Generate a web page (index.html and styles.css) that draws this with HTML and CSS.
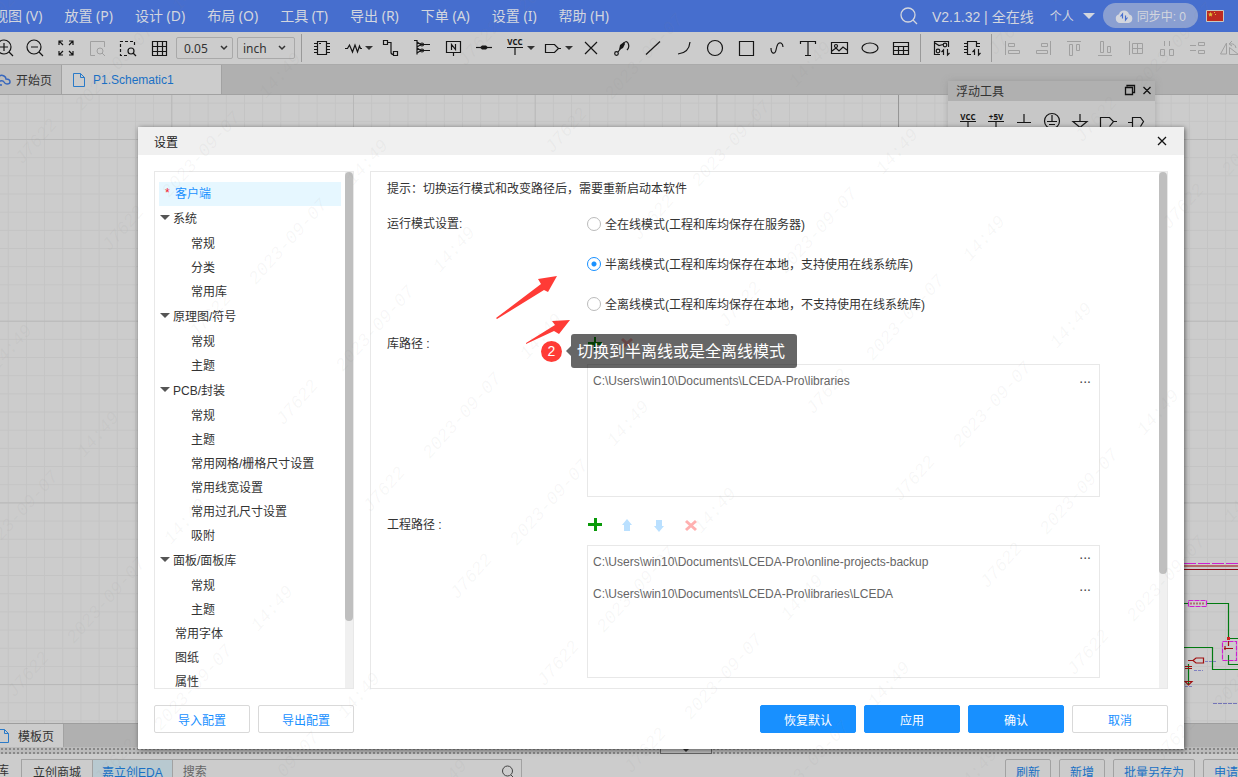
FILE: index.html
```html
<!DOCTYPE html>
<html lang="zh-CN">
<head>
<meta charset="utf-8">
<title>设置</title>
<link rel="stylesheet" href="styles.css">
</head>
<body>
<div class="app">
  <header class="menubar">
    <nav class="menus">
      <a href="#">视图 (V)</a><a href="#">放置 (P)</a><a href="#">设计 (D)</a><a href="#">布局 (O)</a><a href="#">工具 (T)</a><a href="#">导出 (R)</a><a href="#">下单 (A)</a><a href="#">设置 (I)</a><a href="#">帮助 (H)</a>
    </nav>
    <div class="account">
      <svg class="search" width="18" height="18" viewBox="0 0 18 18"><circle cx="8" cy="8" r="7"/><path d="M13 13l4 4"/></svg>
      <span class="version">V2.1.32 | 全在线</span>
      <button class="user" type="button">个人<i class="caret wide"></i></button>
      <button class="sync" type="button"><svg width="18" height="14" viewBox="0 0 18 14"><path fill="#d3d6de" d="M5 14a4.500 4.500 0 0 1-1-8.800A5.200 5.200 0 0 1 14 5.200 4.500 4.500 0 0 1 13.500 14z"/><path fill="none" stroke="#466ece" stroke-width="1.200" d="M5.500 7.500L7.500 5v4.500M12.500 8.500L10.500 11V6.500"/></svg>同步中: 0</button>
      <svg width="18" height="12" viewBox="0 0 18 12"><path fill="#bd2a20" stroke="#c9c9c0" d="M.5.5h17v11H.5z"/><path fill="#e0be38" d="M4.500 2l.8 1.500 1.700.2-1.300 1.100.3 1.700-1.500-.8L3 6.500l.3-1.700L2 3.700l1.700-.2zM8 2h1v1H8zM9 4h1v1H9z"/></svg>
    </div>
  </header>

  <div class="toolbar">
    <div class="tools first">
      <button type="button" aria-label="放大"><svg viewBox="0 0 24 24"><circle cx="12" cy="11" r="7"/><path d="M17 16l4 4M8 11h8M12 7v8"/></svg></button>
      <button type="button" aria-label="缩小"><svg viewBox="0 0 24 24"><circle cx="11" cy="11" r="7"/><path d="M16 16l4 4M8 11h7"/></svg></button>
      <button type="button" aria-label="适应窗口"><svg viewBox="0 0 24 24"><path d="M9 9L5 5M5 9V5h4M15 9l4-4M15 5h4v4M9 15l-4 4M5 15v4h4M15 15l4 4M19 15v4h-4"/></svg></button>
      <button type="button" aria-label="缩放选中" disabled><svg viewBox="0 0 24 24"><path d="M10 19.500H5.500v-14h14V11"/><circle cx="15" cy="15" r="3"/><path d="M17 17l3 3"/></svg></button>
      <button type="button" aria-label="框选缩放"><svg viewBox="0 0 24 24"><path stroke-dasharray="3 2" d="M11 19.500H4.500v-14h14V11"/><circle cx="15" cy="15" r="3"/><path d="M17 17l3 3"/></svg></button>
      <button type="button" aria-label="网格"><svg viewBox="0 0 24 24"><path d="M5.500 5.500h14v14h-14zM10.500 5v15M15.500 5v15M5 10.500h15M5 15.500h15"/></svg></button>
    </div>
    <select class="grid-size" aria-label="网格尺寸"><option>0.05</option></select>
    <select class="unit" aria-label="单位"><option>inch</option></select>
    <i class="sep"></i>
    <div class="tools">
      <button type="button" aria-label="器件"><svg viewBox="0 0 24 24"><path d="M7.500 5.500h9v13h-9zM4 7.500h3M4 10.500h3M4 13.500h3M4 16.500h3M17 7.500h3M17 10.500h3M17 13.500h3M17 16.500h3M9 7.500h2"/></svg></button>
      <button type="button" aria-label="常用器件" class="drop"><svg viewBox="0 0 24 24"><path d="M4 12.500h2.500l2-3.500 3 7 2.500-7 2.500 7 2-6 1 2.500H21"/></svg><i class="caret"></i></button>
      <button type="button" aria-label="导线"><svg viewBox="0 0 24 24"><path d="M4.500 4.500h4v4h-4zM9 6.500h3v10q0 2 3 2M14.500 15.500h4v4h-4z"/></svg></button>
      <button type="button" aria-label="总线"><svg viewBox="0 0 24 24"><path d="M4 4.500h3v14M7 6l4 2.500h9M7 12l4 2.500h9M7 11l4-2.500M7 17l4-2.500"/><circle cx="12" cy="8.500" r="1.500"/><circle cx="12" cy="14.500" r="1.500"/></svg></button>
      <button type="button" aria-label="网络标签"><svg viewBox="0 0 24 24"><path d="M5.500 5.500h14v11h-14zM12.500 17v3M10.500 14V8.500l4 5V8"/></svg></button>
      <button type="button" aria-label="节点"><svg viewBox="0 0 24 24"><path d="M4 11.500h16"/><path class="solid" stroke="none" d="M8 11.500l2-2h4l2 2-2 2h-4z"/></svg></button>
      <button type="button" aria-label="电源" class="drop"><svg viewBox="0 0 24 24"><text x="12" y="9">VCC</text><path d="M4 11.500h16M12 12v7"/></svg><i class="caret"></i></button>
      <button type="button" aria-label="端口" class="drop"><svg viewBox="0 0 24 24"><path d="M4.500 8.500h9l4 4-4 4h-9zM17 12.500h3"/></svg><i class="caret"></i></button>
      <button type="button" aria-label="非连接标识"><svg viewBox="0 0 24 24"><path d="M6 6l12 12M18 6L6 18"/></svg></button>
      <button type="button" aria-label="探针"><svg viewBox="0 0 24 24"><circle cx="6.500" cy="17.500" r="1.800"/><path d="M8 16l3-4M17 14q3-3 1-7-2-3-5 1"/><path class="solid" stroke="none" d="M9 14l1-5 4-3 1 2-2 4z"/></svg></button>
      <button type="button" aria-label="直线"><svg viewBox="0 0 24 24"><path d="M5 18.500L19 5.500"/></svg></button>
      <button type="button" aria-label="圆弧"><svg viewBox="0 0 24 24"><path d="M6 18q11-1 12-12"/></svg></button>
      <button type="button" aria-label="圆"><svg viewBox="0 0 24 24"><circle cx="12" cy="12" r="7.500"/></svg></button>
      <button type="button" aria-label="矩形"><svg viewBox="0 0 24 24"><path d="M5.500 5.500h14v14h-14z"/></svg></button>
      <button type="button" aria-label="曲线"><svg viewBox="0 0 24 24"><path d="M6 12c0 6 4 7 5 2s2-8 5-7q2 1 2 4"/></svg></button>
      <button type="button" aria-label="文本"><svg viewBox="0 0 24 24"><path d="M4.500 8V5.500h15V8M12 5v14M9 19.500h6"/></svg></button>
      <button type="button" aria-label="图片"><svg viewBox="0 0 24 24"><path d="M4.500 6.500h16v11h-16zM5 15l4-3 3 3 4-4 4 3"/><circle cx="9" cy="10" r="1.500"/></svg></button>
      <button type="button" aria-label="椭圆"><svg viewBox="0 0 24 24"><ellipse cx="12" cy="12" rx="8" ry="5"/></svg></button>
      <button type="button" aria-label="表格"><svg viewBox="0 0 24 24"><path d="M4.500 6.500h15v12h-15zM4 10.500h16M4 14.500h16M9.500 11v8M14.500 11v8"/></svg></button>
    </div>
    <i class="sep"></i>
    <div class="tools">
      <button type="button" aria-label="标注"><svg viewBox="0 0 24 24"><path d="M11 18.500H5.500v-13h14V11M6 7l4 2.500 4-1M14.500 19v-5l-2 2M18.500 13v6l2-2"/><circle cx="16" cy="9" r="1.800"/><circle cx="9" cy="15" r="1.800"/></svg></button>
      <button type="button" aria-label="更新器件"><svg viewBox="0 0 24 24"><path d="M11 18.500H7.500v-13h9V11M4 7.500h3M4 10.500h3M4 13.500h3M4 16.500h3M17 7.500h3M17 10.500h3M14.500 19v-5l-2 2M18.500 13v6l2-2"/></svg></button>
    </div>
    <i class="sep"></i>
    <div class="tools">
      <button type="button" aria-label="左对齐" disabled><svg viewBox="0 0 24 24"><path d="M5.500 5v14M8.500 7.500h6v3h-6zM8.500 14.500h11v3h-11z"/></svg></button>
      <button type="button" aria-label="右对齐" disabled><svg viewBox="0 0 24 24"><path d="M19.500 5v14M10.500 7.500h6v3h-6zM5.500 14.500h11v3h-11z"/></svg></button>
      <button type="button" aria-label="顶对齐" disabled><svg viewBox="0 0 24 24"><path d="M5 5.500h14M7.500 8.500h3v11h-3zM14.500 8.500h3v6h-3z"/></svg></button>
      <button type="button" aria-label="底对齐" disabled><svg viewBox="0 0 24 24"><path d="M5 19.500h14M7.500 5.500h3v11h-3zM14.500 10.500h3v6h-3z"/></svg></button>
      <button type="button" aria-label="对齐网格" disabled><svg viewBox="0 0 24 24"><path d="M5.500 5v14M8.500 7.500h10v10h-10zM13.500 7v11M8 12.500h11"/></svg></button>
      <button type="button" aria-label="水平等距" disabled><svg viewBox="0 0 24 24"><path d="M9.500 5v5M14.500 5v5M5.500 13.500h4v6h-4zM14.500 13.500h4v6h-4z"/></svg></button>
      <button type="button" aria-label="垂直等距" disabled><svg viewBox="0 0 24 24"><path d="M4 9.500h6M4 14.500h6M12.500 6.500h6v3h-6zM12.500 14.500h6v3h-6z"/></svg></button>
      <button type="button" aria-label="旋转" disabled><svg viewBox="0 0 24 24"><path d="M9.500 7v11h-6zM12.500 18.500h9l-9-7zM13 8q5-1 6 4M15 5l-3 3 3 2"/></svg></button>
    </div>
  </div>

  <div class="tabs">
    <a href="#" class="tab home"><svg width="14" height="14" viewBox="0 0 14 14"><path fill="none" stroke="#3666bd" stroke-width="1.500" d="M0 8Q0 6 1 5q2-4 6-2 2 1 2 3 4 0 4 3 0 2-3 2-2 0-3-2T3 8q-2 2 0 4h2"/></svg>开始页</a>
    <a href="#" class="tab active"><svg width="14" height="16" viewBox="0 0 14 16"><path fill="none" stroke="#2a7ac8" d="M1.500 1.500h7l4 4v9h-11zM8.500 1.500v4h4"/></svg>P1.Schematic1</a>
  </div>

  <main class="canvas">
    <svg class="grid" width="100%" height="100%">
      <defs>
        <pattern id="minor" width="18.170" height="18.170" patternUnits="userSpaceOnUse" x="-10.400" y="44"><path d="M0 .5H18.200M.5 0V18.200" stroke="#c4c4c4" fill="none"/></pattern>
        <pattern id="major" width="181.700" height="181.700" patternUnits="userSpaceOnUse" x="-10.400" y="44"><path d="M0 .5H182M.5 0V182" stroke="#b8b8b8" fill="none"/></pattern>
      </defs>
      <rect width="100%" height="100%" fill="url(#minor)"/><rect width="100%" height="100%" fill="url(#major)"/>
      <path d="M898.500 0v40" stroke="#969696"/>
    </svg>
    <svg class="schematic" width="54" height="150" viewBox="1184 555 54 150">
      <g fill="none"><path stroke="#cf1fcf" stroke-dasharray="12 2" d="M1184 563.500h54"/><path stroke="#b56a6a" stroke-width="2" d="M1184 566h54"/><path stroke="#8c0a18" d="M1184 569.500h54"/>
      <path stroke="#007a10" stroke-width="1.200" d="M1184 603.500h4M1206 603.500h22.500v35M1228.500 638.500h10M1184 647.500h28.500v22H1238M1228.500 655v9.500h10M1188.500 664v20"/>
      <path stroke="#cf1fcf" stroke-width="1.200" stroke-dasharray="5 1" d="M1188.500 600.500h18v6h-18zM1222.500 641.500h14v19h-14z"/><path stroke="#b07070" stroke-width="2" stroke-dasharray="2 1" d="M1190 603.500h14"/>
      <path stroke="#a01010" stroke-width="1.200" d="M1224 648.500h9M1225 646v4M1228.500 641v5M1193 660.500l3-2.500h7.500v5h-7.500zM1188 660.500h5M1185 666.500h7M1185 668.500h7M1185 681.500h7l-3.500 3.500z"/></g>
      <path fill="#d02020" d="M1227 637h3v3h-3z"/><path stroke="#8080c0" stroke-dasharray="3 1" d="M1205 661.500h11M1194 670.500h9M1185 686.500h8"/><path stroke="#7474b8" stroke-dasharray="4 1" d="M1213 703.500h25"/>
    </svg>
  </main>

  <div class="page-tabs"><a href="#" class="page-tab"><svg width="14" height="16" viewBox="0 0 14 16"><path fill="none" stroke="#2a7ac8" d="M1.500 1.500h7l4 4v9h-11zM8.500 1.500v4h4"/></svg>模板页</a></div>
  <div class="splitter"><i class="handle"><i class="caret"></i></i></div>
  <footer class="library">
    <span class="lib-label">库</span>
    <div class="lib-search"><button type="button">立创商城</button><button type="button" class="on">嘉立创EDA</button><input type="text" placeholder="搜索" aria-label="搜索"><svg width="14" height="14" viewBox="0 0 14 14"><circle cx="6.500" cy="6" r="5"/><path d="M10 10l3 3"/></svg></div>
    <div class="lib-actions"><button type="button">刷新</button><button type="button">新增</button><button type="button">批量另存为</button><button type="button">申请</button></div>
  </footer>
</div>

<section class="floating">
  <div class="floating-title"><span>浮动工具</span><svg width="32" height="12" viewBox="0 0 32 12"><path d="M4 2.500V1.500h7.500v7H10M2.500 3.500h7v7h-7zM20.500 3l7 7M27.500 3l-7 7"/></svg></div>
  <div class="floating-icons">
    <svg viewBox="0 0 24 24"><text x="12" y="10">VCC</text><path d="M4 11.500h16M12 12v7"/></svg>
    <svg viewBox="0 0 24 24"><text x="12" y="10">+5V</text><path d="M4 11.500h16M12 12v7"/></svg>
    <svg viewBox="0 0 24 24"><path d="M12 4v8M5 12.500h14"/></svg>
    <svg viewBox="0 0 24 24"><circle cx="12" cy="11" r="7.500"/><path d="M12 5v6M7 11.500h10M9 14.500h6"/></svg>
    <svg viewBox="0 0 24 24"><path d="M12 4v7M5 11.500h14l-7 6z"/></svg>
    <svg viewBox="0 0 24 24"><path d="M4.500 17V7.500h9l4 4-4 5M17 11.500h4"/></svg>
    <svg viewBox="0 0 24 24"><path d="M4 12.500h4M8.500 17V7.500h8l3 4-3 5"/></svg>
  </div>
</section>

<section class="dialog" role="dialog" aria-labelledby="dialog-title">
  <div class="dialog-title"><span id="dialog-title">设置</span><button type="button" aria-label="关闭"><svg width="12" height="12" viewBox="0 0 12 12"><path d="M2 2l8 8M10 2l-8 8"/></svg></button></div>
  <div class="dialog-body">
    <nav class="tree">
      <ul>
        <li class="leaf top selected"><a href="#"><b>*</b>客户端</a></li>
        <li class="group"><a href="#">系统</a></li>
        <li class="leaf"><a href="#">常规</a></li><li class="leaf"><a href="#">分类</a></li><li class="leaf"><a href="#">常用库</a></li>
        <li class="group"><a href="#">原理图/符号</a></li>
        <li class="leaf"><a href="#">常规</a></li><li class="leaf"><a href="#">主题</a></li>
        <li class="group"><a href="#">PCB/封装</a></li>
        <li class="leaf"><a href="#">常规</a></li><li class="leaf"><a href="#">主题</a></li><li class="leaf"><a href="#">常用网格/栅格尺寸设置</a></li><li class="leaf"><a href="#">常用线宽设置</a></li><li class="leaf"><a href="#">常用过孔尺寸设置</a></li><li class="leaf"><a href="#">吸附</a></li>
        <li class="group"><a href="#">面板/面板库</a></li>
        <li class="leaf"><a href="#">常规</a></li><li class="leaf"><a href="#">主题</a></li>
        <li class="leaf top"><a href="#">常用字体</a></li><li class="leaf top"><a href="#">图纸</a></li><li class="leaf top"><a href="#">属性</a></li>
      </ul>
      <div class="scroll"><i class="thumb tree-thumb"></i></div>
    </nav>
    <div class="panel">
      <form class="settings">
        <p class="tip">提示：切换运行模式和改变路径后，需要重新启动本软件</p>
        <div class="field">
          <span class="label">运行模式设置:</span>
          <div class="control">
            <label><input type="radio" name="mode"><span>全在线模式(工程和库均保存在服务器)</span></label>
            <label><input type="radio" name="mode" checked><span>半离线模式(工程和库均保存在本地，支持使用在线系统库)</span></label>
            <label><input type="radio" name="mode"><span>全离线模式(工程和库均保存在本地，不支持使用在线系统库)</span></label>
          </div>
        </div>
        <div class="field">
          <span class="label">库路径 :</span>
          <div class="control">
            <div class="path-tools">
              <button type="button" aria-label="添加库路径"><svg viewBox="0 0 16 16"><path fill="#0a9a0a" d="M7 1h2v5h6v3H9v5H7V9H1V6h6z"/></svg></button>
              <button type="button" aria-label="删除库路径"><svg viewBox="0 0 16 16"><path stroke="#ffb0b0" stroke-width="3" d="M3 3l10 9M13 3L3 12"/></svg></button>
            </div>
            <ul class="paths"><li>C:\Users\win10\Documents\LCEDA-Pro\libraries<button type="button" aria-label="浏览">...</button></li></ul>
          </div>
        </div>
        <div class="field spaced">
          <span class="label">工程路径 :</span>
          <div class="control">
            <div class="path-tools">
              <button type="button" aria-label="添加工程路径"><svg viewBox="0 0 16 16"><path fill="#0a9a0a" d="M7 1h3v5h5v3h-5v5H7V9H1V6h6z"/></svg></button>
              <button type="button" aria-label="上移"><svg viewBox="0 0 16 16"><path fill="#bae0ff" d="M8 2l5 6h-2v6H5V8H3z"/></svg></button>
              <button type="button" aria-label="下移"><svg viewBox="0 0 16 16"><path fill="#bae0ff" d="M8 15l5-6h-2V3H5v6H3z"/></svg></button>
              <button type="button" aria-label="删除工程路径"><svg viewBox="0 0 16 16"><path stroke="#ffb0b0" stroke-width="3" d="M3 4l10 9M13 4L3 13"/></svg></button>
            </div>
            <ul class="paths compact"><li>C:\Users\win10\Documents\LCEDA-Pro\online-projects-backup<button type="button" aria-label="浏览">...</button></li><li>C:\Users\win10\Documents\LCEDA-Pro\libraries\LCEDA<button type="button" aria-label="浏览">...</button></li></ul>
          </div>
        </div>
      </form>
      <div class="scroll"><i class="thumb panel-thumb"></i></div>
    </div>
  </div>
  <div class="dialog-footer">
    <button type="button" class="btn">导入配置</button><button type="button" class="btn">导出配置</button>
    <button type="button" class="btn primary push">恢复默认</button><button type="button" class="btn primary">应用</button><button type="button" class="btn primary">确认</button><button type="button" class="btn">取消</button>
  </div>
</section>

<svg class="arrows" width="90" height="80" viewBox="490 270 90 80"><path fill="#ff3b36" d="M496 318L541 284l-3-5 19-3-9 16-4-2-47 29zM526 343l29-18-3-4 18-1-11 14-5-3-28 13z"/></svg>
<div class="callout"><span class="badge">2</span><span class="bubble">切换到半离线或是全离线模式</span></div>
<svg class="watermark" id="watermark" aria-hidden="true"></svg>
<script src="script.js"></script>
</body>
</html>
```
FILE: script.js
```js
// Tile the date, time and user number diagonally over the window.
const layer = document.getElementById('watermark');
const STEP = 87;
const lines = [
  { text: 'J7622', diagonal: -105, phase: 40 },
  { text: '2023-09-07', diagonal: 47, phase: 31 },
  { text: '14:49', diagonal: 205, phase: 23 }
];
for (const line of lines) {
  for (let n = -3; n <= 3; n++) {
    const diff = line.diagonal + n * 541;
    for (let x = line.phase + n * 8 - 5 * STEP; x < innerWidth + STEP; x += STEP) {
      const y = x - diff;
      if (y < -40 || y > innerHeight + 40 || x < -40) continue;
      const t = document.createElementNS('http://www.w3.org/2000/svg', 'text');
      t.setAttribute('transform', `translate(${x} ${y}) rotate(-48)`);
      t.textContent = line.text;
      layer.appendChild(t);
    }
  }
}
```
FILE: styles.css
```css
* { box-sizing: border-box; }
body, ul, p { margin: 0; padding: 0; }
ul { list-style: none; }
body, button, input, select { font-family: "Liberation Sans", "Noto Sans CJK SC", sans-serif; font-size: 12px; }
body { color: #333; overflow: hidden; }
button { margin: 0; padding: 0; border: 0; background: none; color: inherit; }
a { color: inherit; text-decoration: none; }
svg { flex: none; display: block; }

.app { display: flex; flex-direction: column; height: 100vh; background: #ccc; overflow: hidden; }
.caret { border: 4px solid transparent; border-top-color: #333; border-bottom: 0; }
.caret.wide { border-width: 6px 6px 0; border-top-color: #d3d6de; }

.menubar { display: flex; justify-content: space-between; align-items: center; flex: none; height: 32px; padding: 0 14px 2px 0; background: #466ece; color: #d3d6de; font-size: 14px; }
.menus { display: flex; gap: 22px; margin-left: -6px; font-family: "Noto Sans", "Noto Sans CJK SC", sans-serif; }
.menus a { white-space: nowrap; }
.account { display: flex; align-items: center; gap: 8px; padding-top: 1px; white-space: nowrap; }
.search { fill: none; stroke: #d3d6de; stroke-width: 1.300; margin-right: 6px; }
.version { margin-right: 8px; }
.user { display: flex; align-items: center; gap: 9px; }
.sync { display: flex; align-items: center; gap: 4px; height: 25px; padding: 0 12px; border-radius: 13px; background: #8a9fd1; }

.toolbar { display: flex; align-items: center; flex: none; height: 33px; border-bottom: 1px solid #aaa; overflow: hidden; }
.tools { display: flex; flex: none; }
.tools.first { margin-left: -12px; }
.tools button { display: flex; align-items: center; justify-content: center; width: 31px; height: 30px; }
.tools .drop { width: 38px; justify-content: flex-start; padding-left: 4px; }
.tools svg, .floating-icons svg { width: 24px; height: 24px; fill: none; stroke: #151515; stroke-width: 1.200; }
.tools button:disabled svg { stroke: #a0a0a0; stroke-width: 1; }
.tools .solid { fill: #151515; }
.tools text, .floating-icons text { font: bold 8px "Open Sans", sans-serif; text-anchor: middle; fill: #151515; stroke: none; }
.sep { flex: none; width: 1px; height: 28px; margin: 0 4px 0 3px; background: #999; }
.tools + .sep { margin: 0 4px; }
.toolbar select { flex: none; height: 22px; padding: 0 7px; border: 1px solid #a9a9a9; border-radius: 2px; color: #333; font-family: "Noto Sans", sans-serif; appearance: none; background: url("data:image/svg+xml,%3Csvg xmlns='http://www.w3.org/2000/svg' width='8' height='6'%3E%3Cpath d='M1 1l3 3 3-3' fill='none' stroke='%23333' stroke-width='1.500'/%3E%3C/svg%3E") no-repeat right 4px center; }
.toolbar .grid-size { width: 57px; margin-left: 2px; }
.toolbar .unit { width: 58px; margin: 0 3px 0 4px; padding-left: 5px; background-position: right 8px center; }

.tabs { display: flex; flex: none; height: 30px; background: #b0b0b0; border-bottom: 1px solid #a2a2a2; }
.tab { display: flex; align-items: center; border-right: 1px solid #a2a2a2; }
.tab.home { width: 62px; gap: 5px; background: #bdbdbd; }
.tab.home svg { margin-left: -3px; }
.tab.active { width: 160px; padding-left: 10px; gap: 7px; background: #ccc; color: #1a70c4; }

.canvas { position: relative; flex: 1; min-height: 0; overflow: hidden; }
.schematic { position: absolute; right: 0; top: 460px; }

.page-tabs { display: flex; flex: none; height: 24px; background: #b0b0b0; border-top: 1px solid #9e9e9e; }
.page-tab { display: flex; align-items: center; gap: 8px; width: 64px; background: #ccc; border-right: 1px solid #a2a2a2; }
.page-tab svg { margin-left: -4px; }
.splitter { display: flex; justify-content: center; flex: none; height: 7px; padding-left: 133px; background: #bbb radial-gradient(circle, #888 1px, transparent 1px) 0 0 / 4px 4px; }
.handle { display: flex; justify-content: center; width: 52px; border: 1px solid #666; background: #bbb; }
.library { display: flex; flex: none; height: 23px; padding-top: 5px; overflow: hidden; }
.lib-label { width: 21px; margin-left: -3px; margin-right: 3px; line-height: 24px; }
.lib-search { display: flex; align-items: center; width: 501px; height: 26px; border: 1px solid #a2a2a2; padding-right: 6px; }
.lib-search button { height: 24px; padding: 0 11px 2px; border-right: 1px solid #a2a2a2; }
.lib-search .on { padding: 0 9px 2px; background: #b8c9d0; color: #1a70c4; }
.lib-search input { flex: 1; min-width: 0; border: 0; background: none; padding: 0 10px; }
.lib-search input::placeholder { color: #666; }
.lib-search svg { fill: none; stroke: #444; }
.lib-actions { display: flex; gap: 8px; margin-left: auto; margin-right: -11px; }
.lib-actions button { height: 26px; padding: 0 10px 2px; border: 1px solid #a2a2a2; border-radius: 2px; color: #1a70c4; }

.floating { position: absolute; right: 83px; top: 81px; width: 207px; background: #c7c7c7; box-shadow: 0 0 6px #8888; border-radius: 3px; }
.floating-title { display: flex; align-items: center; justify-content: space-between; height: 20px; padding: 0 0 2px 8px; background: #b0b0b0; }
.floating-title svg, .dialog-title svg { fill: none; stroke: #111; stroke-width: 1.300; }
.floating-icons { display: flex; gap: 4px; padding: 9px 8px; }

.dialog { position: absolute; left: 138px; right: 54px; top: 127px; bottom: 28px; display: flex; flex-direction: column; background: #fff; box-shadow: 1px 1px 5px #0008; }
.dialog-title { display: flex; align-items: center; justify-content: space-between; flex: none; height: 28px; padding: 0 16px; background: #f0f0f0; color: #222; }
.dialog-body { display: flex; flex: 1; min-height: 0; gap: 16px; padding: 16px 16px 0; }
.tree, .panel { display: flex; border: 1px solid #e8e8e8; overflow: hidden; }
.tree { flex: none; width: 200px; }
.panel { flex: 1; min-width: 0; }
.tree ul { flex: 1; padding: 10px 4px 0; }
.tree a { display: flex; align-items: center; height: 24px; padding: 0 0 3px 32px; white-space: nowrap; }
.tree .top a { padding-left: 16px; }
.tree .selected a { padding-left: 6px; background: #e6f7ff; color: #1890ff; }
.tree b { width: 10px; color: #f5222d; font-weight: normal; }
.tree .group a { height: 26px; padding: 0 0 4px 1px; gap: 3px; }
.tree .group a::before { content: ""; border: 5px solid transparent; border-top: 5px solid #555; border-bottom: 0; }
.scroll { flex: none; width: 8px; background: #f0f0f0; }
.thumb { display: block; border-radius: 4px; background: #bfbfbf; }
.tree-thumb { height: 87%; }
.panel-thumb { height: 78%; }

.settings { flex: 1; min-width: 0; padding: 0 59px 0 16px; }
.tip { height: 32px; line-height: 34px; }
.field { display: flex; }
.field.spaced { margin-top: 8px; }
.label { flex: none; width: 200px; line-height: 40px; }
.control { flex: 1; min-width: 0; }
.control label { display: flex; align-items: center; gap: 4px; height: 40px; white-space: nowrap; }
.control label span { padding-bottom: 2px; }
.control input { appearance: none; width: 14px; height: 14px; margin: 0; border: 1px solid #bbb; border-radius: 50%; background: #fff; }
.control input:checked { border-color: #1890ff; background: radial-gradient(circle, #1890ff 2px, #fff 3px); }
.path-tools { display: flex; align-items: center; gap: 16px; height: 40px; }
.path-tools svg { width: 16px; height: 16px; }
.paths { height: 133px; border: 1px solid #e8e8e8; }
.paths li { display: flex; justify-content: space-between; height: 32px; padding: 0 8px 0 5px; color: #666; line-height: 32px; }
.paths button { height: 26px; font-size: 14px; line-height: 26px; color: #444; }
.paths.compact button { height: 16px; line-height: 16px; }

.dialog-footer { display: flex; flex: none; gap: 8px; padding: 16px; }
.btn { width: 96px; height: 28px; border: 1px solid #d9d9d9; border-radius: 2px; background: #fff; color: #1890ff; }
.btn.primary { border-color: #1890ff; background: #1890ff; color: #fff; }
.push { margin-left: auto; }

.arrows { position: absolute; left: 490px; top: 270px; }
.callout { position: absolute; left: 541px; top: 334px; display: flex; align-items: center; gap: 9px; }
.badge { width: 21px; height: 21px; border-radius: 50%; background: #ff3b36; color: #fff; font-size: 14px; line-height: 21px; text-align: center; }
.bubble { position: relative; padding: 1px 12px 0 6px; border-radius: 3px; background: #0009; color: #fff; font-size: 16px; line-height: 33px; white-space: nowrap; }
.bubble::before { content: ""; position: absolute; left: -5px; top: 12px; border: 5px solid transparent; border-right-color: #0009; border-left: 0; }
.watermark { position: absolute; inset: 0; width: 100%; height: 100%; pointer-events: none; fill: #8881; font: italic 18px "Liberation Mono", monospace; text-anchor: middle; }
```
